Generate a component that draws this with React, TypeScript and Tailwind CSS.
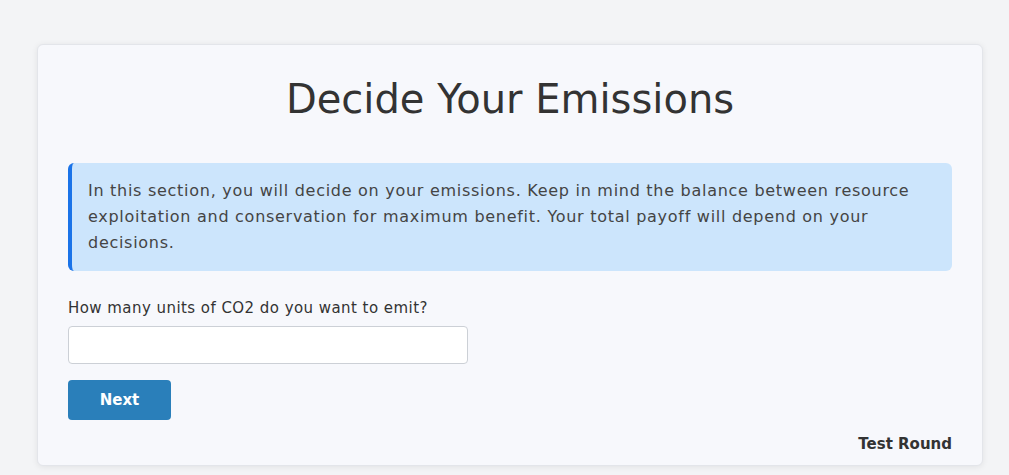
export default function App() {
  return (
    <div className="min-h-[475px] bg-[#f3f4f6] pt-[44px] font-['DejaVu_Sans',sans-serif] text-[#333]">
      <div className="ml-[37px] w-[946px] rounded-md border border-[#e3e5ea] bg-[#f7f8fc] px-[30px] pb-[10px] shadow-[0_1px_6px_rgba(0,0,0,0.08)]">
        <h1 className="pt-[24px] text-center text-[40px] leading-[60px] font-normal text-[#333]">
          Decide Your Emissions
        </h1>

        <div className="mt-[34px] rounded-md border-l-4 border-[#1a73e8] bg-[#cce5fc] py-[15px] pr-[20px] pl-[16px] text-[16px] leading-[26px] tracking-[0.72px] text-[#444]">
          In this section, you will decide on your emissions. Keep in mind the balance between resource
          <br />
          exploitation and conservation for maximum benefit. Your total payoff will depend on your
          <br />
          decisions.
        </div>

        <label className="mt-[26px] block text-[15px] leading-[22px] tracking-[0.45px] text-[#333]">
          How many units of CO2 do you want to emit?
        </label>
        <input
          type="text"
          className="mt-[7px] block h-[38px] w-[400px] rounded-[4px] border border-[#ccd0d6] bg-white px-3 outline-none"
        />

        <button className="mt-[16px] h-[40px] w-[103px] rounded-[4px] bg-[#2a7fba] text-[15px] font-bold text-white">
          Next
        </button>

        <div className="mt-[13px] text-right text-[15px] leading-[22px] font-bold text-[#333]">Test Round</div>
      </div>
    </div>
  );
}
